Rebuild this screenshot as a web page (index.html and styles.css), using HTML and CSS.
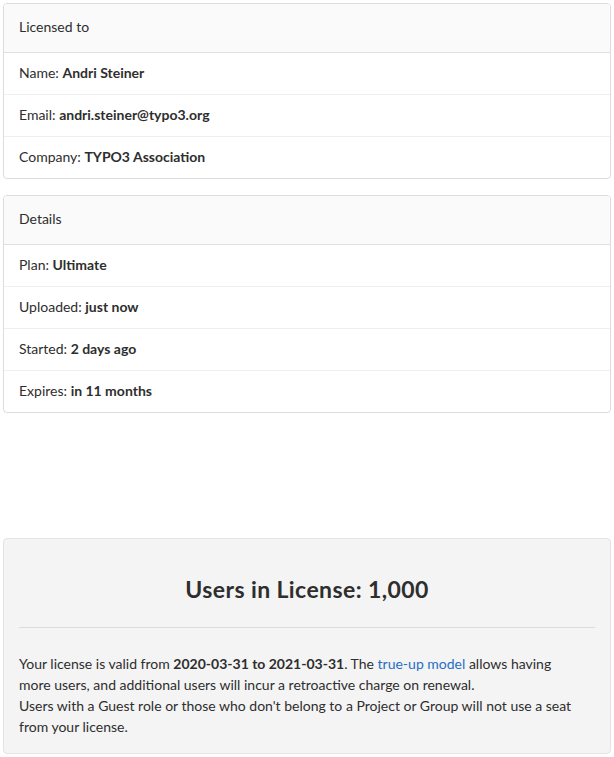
FILE: index.html
```html
<!DOCTYPE html>
<html lang="en">
<head>
    <meta charset="UTF-8">
    <meta name="viewport" content="width=device-width, initial-scale=1.0">
    <title>License</title>
    <link rel="stylesheet" href="styles.css">
</head>
<body>
    <div class="page">
        <div class="card">
            <div class="card-header">Licensed to</div>
            <ul class="list">
                <li>Name: <strong>Andri Steiner</strong></li>
                <li>Email: <strong>andri.steiner@typo3.org</strong></li>
                <li>Company: <strong>TYPO3 Association</strong></li>
            </ul>
        </div>

        <div class="card">
            <div class="card-header">Details</div>
            <ul class="list">
                <li>Plan: <strong>Ultimate</strong></li>
                <li>Uploaded: <strong>just now</strong></li>
                <li>Started: <strong>2 days ago</strong></li>
                <li>Expires: <strong>in 11 months</strong></li>
            </ul>
        </div>

        <div class="seats">
            <h2>Users in License: 1,000</h2>
            <hr>
            <p>Your license is valid from <strong>2020-03-31 to 2021-03-31</strong>. The <a href="#">true-up model</a> allows having more users, and additional users will incur a retroactive charge on renewal.<br>Users with a Guest role or those who don't belong to a Project or Group will not use a seat from your license.</p>
        </div>
    </div>
</body>
</html>
```
FILE: styles.css
```css
body {
    margin: 0;
    font-family: Lato, "Open Sans", sans-serif;
    font-size: 14px;
    line-height: 21px;
    color: #2e2e2e;
    background-color: #fff;
}
.page {
    padding: 3px;
}
.card {
    border: 1px solid #dcdcdc;
    border-radius: 4px;
    margin-bottom: 16px;
    overflow: hidden;
}
.card-header {
    background-color: #fafafa;
    border-bottom: 1px solid #e0e0e0;
    padding: 12px 15px 15px;
    line-height: 21px;
}
.list {
    list-style: none;
    margin: 0;
    padding: 0;
}
.list li {
    padding: 9px 15px 11px;
    border-top: 1px solid #efefef;
}
.list li:first-child {
    border-top: none;
}
strong {
    font-weight: bold;
}
.seats {
    margin-top: 125px;
    background-color: #f4f4f4;
    border: 1px solid #e3e3e3;
    border-radius: 4px;
    padding: 16px 15px;
}
.seats h2 {
    margin: 21px 0 0;
    text-align: center;
    font-size: 23px;
    letter-spacing: 0.4px;
    line-height: 26px;
    font-weight: bold;
}
.seats hr {
    margin: 25px 0 0;
    border: none;
    border-top: 1px solid #dcdcdc;
}
.seats p {
    margin: 25px 0 0;
    max-width: 560px;
}
.seats a {
    color: #1f6fc5;
    text-decoration: none;
}
```
